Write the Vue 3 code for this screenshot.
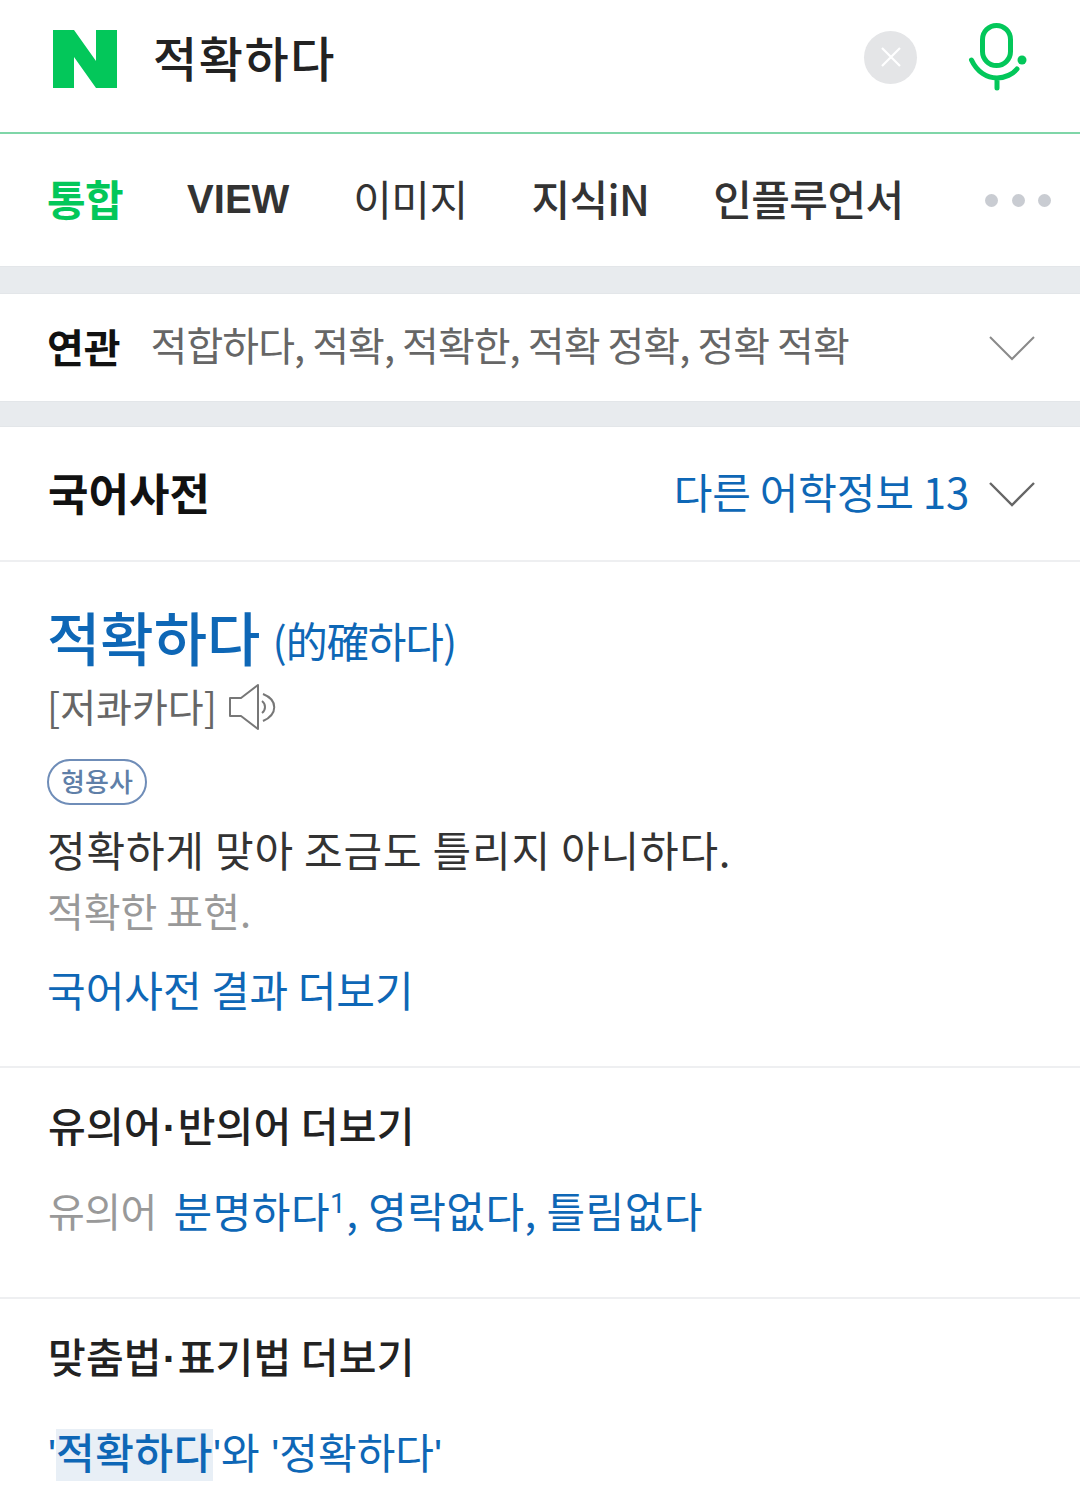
<script setup>
const tabs = [
  { label: '통합', cls: 'active' },
  { label: 'VIEW', cls: 'bold' },
  { label: '이미지', cls: '' },
  { label: '지식iN', cls: 'medium' },
  { label: '인플루언서', cls: 'medium' }
]
</script>

<template>
  <div class="page">
    <header class="search">
      <svg class="logo" width="64" height="58" viewBox="0 0 64 58">
        <path d="M0 0H21L43 31V0H64V58H43L21 27V58H0Z" fill="#03c75a" />
      </svg>
      <div class="query">적확하다</div>
      <span class="clear">
        <svg width="24" height="24" viewBox="0 0 24 24">
          <path d="M3 3L21 21M21 3L3 21" stroke="#fff" stroke-width="2.2" fill="none" />
        </svg>
      </span>
      <svg class="mic" width="62" height="72" viewBox="0 0 62 72">
        <rect x="16.5" y="5.5" width="28" height="40" rx="14" fill="none" stroke="#03c75a" stroke-width="5" />
        <path d="M5.5 40C11 52 21 58 31 58C39 58 47 54 51 49M31 58V68" fill="none" stroke="#03c75a" stroke-width="5" stroke-linecap="round" />
        <circle cx="56" cy="40" r="4.5" fill="#03c75a" />
      </svg>
    </header>

    <nav class="tabs">
      <a v-for="tab in tabs" :key="tab.label" class="tab" :class="tab.cls">{{ tab.label }}</a>
      <span class="dots"><i></i><i></i><i></i></span>
    </nav>

    <div class="band first"></div>

    <section class="related">
      <strong>연관</strong>
      <span class="related-list">적합하다, 적확, 적확한, 적확 정확, 정확 적확</span>
      <svg class="chev" width="46" height="26" viewBox="0 0 46 26">
        <path d="M1 2L23 24L45 2" fill="none" stroke="#8a8a8a" stroke-width="2" />
      </svg>
    </section>

    <div class="band"></div>

    <section class="dict-head">
      <h2>국어사전</h2>
      <span class="other">다른 어학정보 13</span>
      <svg class="chev" width="46" height="26" viewBox="0 0 46 26">
        <path d="M1 2L23 24L45 2" fill="none" stroke="#666" stroke-width="2.4" />
      </svg>
    </section>

    <section class="entry">
      <div class="word">
        <span class="word-main">적확하다</span>
        <span class="word-sub">(的確하다)</span>
      </div>
      <div class="pron">
        <span class="pron-text">[저콰카다]</span>
        <svg width="48" height="46" viewBox="0 0 48 46">
          <path d="M1 14H12L29 1V45L12 32H1Z" fill="none" stroke="#777" stroke-width="2" stroke-linejoin="round" />
          <path d="M33 17C37 20 37 26 33 29M34 10C49 16 49 30 34 37" fill="none" stroke="#777" stroke-width="2" />
        </svg>
      </div>
      <span class="pos">형용사</span>
      <p class="mean">정확하게 맞아 조금도 틀리지 아니하다.</p>
      <p class="example">적확한 표현.</p>
      <a class="more">국어사전 결과 더보기</a>
    </section>

    <section class="syn">
      <h3>유의어<span class="mid">·</span>반의어 더보기</h3>
      <p class="syn-row">
        <span class="syn-label">유의어</span>
        <span class="link">분명하다<sup>1</sup>, 영락없다, 틀림없다</span>
      </p>
    </section>

    <section class="spell">
      <h3>맞춤법<span class="mid">·</span>표기법 더보기</h3>
      <p class="spell-row">'<mark>적확하다</mark>'와 '정확하다'</p>
    </section>
  </div>
</template>

<style scoped>
.page {
  width: 1080px;
  height: 1493px;
  overflow: hidden;
  background: #fff;
  font-family: "Noto Sans CJK KR", "Noto Sans", sans-serif;
  color: #222;
}

.search {
  height: 134px;
  display: flex;
  align-items: center;
  padding: 0 52px 16px 53px;
  box-sizing: border-box;
  border-bottom: 2px solid #7fd6a8;
}

.logo {
  flex: none;
  margin-top: 2px;
}

.query {
  flex: 1;
  margin-left: 36px;
  margin-bottom: 4px;
  font-size: 48px;
  font-weight: 500;
  letter-spacing: 1.6px;
  color: #222;
}

.clear {
  width: 53px;
  height: 53px;
  border-radius: 50%;
  background: #e4e5e7;
  display: flex;
  align-items: center;
  justify-content: center;
  margin-right: 49px;
  margin-bottom: 2px;
}

.mic {
  flex: none;
  margin-bottom: 4px;
}

.tabs {
  height: 132px;
  display: flex;
  align-items: center;
  padding-left: 47px;
  padding-bottom: 6px;
  box-sizing: border-box;
  gap: 64px;
  font-size: 42px;
  color: #333;
}

.tab {
  letter-spacing: -0.6px;
}

.tab.active {
  color: #03c75a;
  font-weight: 700;
}

.tab.bold {
  font-weight: 700;
  font-size: 40px;
  font-family: "Liberation Sans", "Noto Sans CJK KR", sans-serif;
  letter-spacing: 0;
  margin-top: 4px;
}

.tab.medium {
  font-weight: 500;
}

.dots {
  margin-left: 18px;
  margin-top: 6px;
  display: flex;
  gap: 13.5px;
}

.dots i {
  width: 13px;
  height: 13px;
  border-radius: 50%;
  background: #c9ccd2;
}

.band {
  height: 26px;
  background: #e8ebee;
  border-top: 1px solid #e3e6e9;
  border-bottom: 1px solid #e3e6e9;
  box-sizing: border-box;
}

.band.first {
  height: 28px;
}

.related {
  height: 107px;
  display: flex;
  align-items: center;
  padding: 0 45px 0 47px;
}

.related strong {
  font-size: 40px;
  font-weight: 700;
  color: #111;
  margin-bottom: 4px;
}

.related-list {
  flex: 1;
  margin-left: 30px;
  margin-bottom: 8px;
  font-size: 40px;
  letter-spacing: -0.95px;
  color: #666;
}

.chev {
  flex: none;
}

.dict-head {
  height: 135px;
  display: flex;
  align-items: center;
  padding: 0 45px 0 48px;
  border-bottom: 2px solid #eeeff1;
  box-sizing: border-box;
}

.dict-head h2 {
  flex: 1;
  margin: 0 0 4px;
  font-size: 44px;
  font-weight: 700;
  color: #111;
}

.other {
  font-size: 42px;
  letter-spacing: -0.2px;
  color: #0e67b6;
  margin-right: 20px;
  margin-bottom: 6px;
}

.entry {
  height: 506px;
  padding: 0 47px;
  border-bottom: 2px solid #eeeff1;
  box-sizing: border-box;
}

.word {
  padding-top: 30px;
  display: flex;
  height: 88px;
}

.word-main {
  font-size: 58px;
  font-weight: 500;
  color: #0e67b6;
  line-height: 88px;
}

.word-sub {
  margin-left: 12px;
  margin-top: 4px;
  font-size: 42px;
  line-height: 88px;
  color: #0e67b6;
  letter-spacing: -1px;
}

.pron {
  display: flex;
  align-items: center;
  gap: 12px;
  height: 60px;
  margin-top: -3px;
  font-size: 39px;
  color: #666;
}

.pron-text {
  margin-bottom: 4px;
}

.pos {
  display: inline-block;
  margin-top: 22px;
  width: 100px;
  height: 46px;
  line-height: 40px;
  border: 2px solid #6f8db8;
  border-radius: 23px;
  box-sizing: border-box;
  text-align: center;
  font-size: 26px;
  font-weight: 500;
  color: #5f7fa8;
}

.mean {
  margin: 13px 0 0;
  font-size: 42px;
  letter-spacing: 0.8px;
  line-height: 62px;
  color: #333;
}

.example {
  margin: -1px 0 0;
  font-size: 40px;
  line-height: 62px;
  color: #999;
}

.more {
  display: block;
  margin-top: 17px;
  font-size: 42px;
  line-height: 62px;
  color: #0e67b6;
}

.syn {
  height: 231px;
  padding: 25px 48px 0;
  border-bottom: 2px solid #eeeff1;
  box-sizing: border-box;
}

h3 {
  margin: 0;
  font-size: 41px;
  font-weight: 500;
  letter-spacing: 0.2px;
  line-height: 62px;
  color: #222;
}

.mid {
  font-family: "Liberation Sans", sans-serif;
  font-weight: 700;
  margin: 0 1px;
}

.syn-row {
  margin: 20px 0 0;
  font-size: 42px;
  line-height: 62px;
  display: flex;
  gap: 17px;
}

.syn-label {
  font-size: 40px;
  letter-spacing: -0.6px;
  color: #999;
}

.link {
  color: #0e67b6;
  letter-spacing: 0.45px;
}

.link sup {
  font-family: "Roboto", sans-serif;
  font-size: 28px;
  line-height: 0;
}

.spell {
  padding: 25px 48px 0;
}

.spell-row {
  margin: 34px 0 0;
  font-family: "Liberation Sans", "Noto Sans CJK KR", sans-serif;
  font-size: 42px;
  line-height: 62px;
  color: #0e67b6;
}

mark {
  display: inline-block;
  height: 52px;
  line-height: 52px;
  background: #e8eff6;
  color: #0e67b6;
  font-weight: 500;
  letter-spacing: 0.6px;
}
</style>
